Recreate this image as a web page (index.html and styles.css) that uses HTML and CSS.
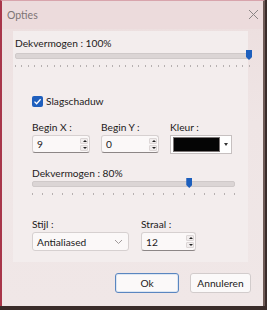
FILE: index.html
```html
<!DOCTYPE html>
<html>
<head>
  <meta charset="utf-8">
  <title>Opties</title>
  <link rel="stylesheet" href="styles.css">
</head>
<body>

  <div class="window">
    <div class="titlebar">
      <span class="title">Opties</span>
      <svg class="close" width="11" height="11" viewBox="0 0 11 11">
        <path d="M1 1L10 10M10 1L1 10" stroke="#8a8484" stroke-width="1" fill="none"/>
      </svg>
    </div>

    <div class="panel">
      <div class="label">Dekvermogen : 100%</div>
      <div class="slider wide">
        <div class="track"></div>
        <div class="thumb" style="left: calc(100% - 6px)"></div>
        <div class="ticks"></div>
      </div>

      <div class="group">
        <label class="check">
          <span class="box">
            <svg width="9" height="9" viewBox="0 0 9 9"><path d="M1.5 4.6L3.6 6.7L7.6 2.2" stroke="#fff" stroke-width="1.3" fill="none"/></svg>
          </span>
          Slagschaduw
        </label>

        <div class="row">
          <div class="field">
            <div class="label">Begin X :</div>
            <div class="spin">
              <span class="value">9</span>
              <span class="arrows"><span class="up"></span><span class="down"></span></span>
            </div>
          </div>
          <div class="field">
            <div class="label">Begin Y :</div>
            <div class="spin">
              <span class="value">0</span>
              <span class="arrows"><span class="up"></span><span class="down"></span></span>
            </div>
          </div>
          <div class="field">
            <div class="label">Kleur :</div>
            <div class="color">
              <span class="swatch"></span>
              <span class="drop"></span>
            </div>
          </div>
        </div>

        <div class="label opacity">Dekvermogen : 80%</div>
        <div class="slider narrow">
          <div class="track"></div>
          <div class="thumb" style="left: 76%"></div>
          <div class="ticks"></div>
        </div>

        <div class="row bottom-row">
          <div class="field">
            <div class="label">Stijl :</div>
            <div class="select">
              <span class="value">Antialiased</span>
              <svg width="9" height="6" viewBox="0 0 9 6"><path d="M1 1L4.5 4.5L8 1" stroke="#a09a9a" stroke-width="1" fill="none"/></svg>
            </div>
          </div>
          <div class="field">
            <div class="label">Straal :</div>
            <div class="spin straal">
              <span class="value">12</span>
              <span class="arrows"><span class="up"></span><span class="down"></span></span>
            </div>
          </div>
        </div>
      </div>
    </div>

    <div class="buttons">
      <button class="btn default">Ok</button>
      <button class="btn">Annuleren</button>
    </div>
  </div>

</body>
</html>
```

FILE: styles.css
```css
html, body {
  margin: 0;
  padding: 0;
  background: #3a2c2a;
}
body {
  font-family: Lato, "Noto Sans", Arial, sans-serif;
  font-size: 10.2px;
  color: #1c1a1a;
}
.window {
  width: 265px;
  height: 306px;
  background: linear-gradient(180deg, #ecdede 0%, #efe5e5 40%, #f0e7e7 100%);
  border-left: 2px solid #a8364a;
  border-top: 1px solid #d8a4ac;
  border-right: 2px solid #6e5a56;
  display: flex;
  flex-direction: column;
  box-sizing: border-box;
}
.titlebar {
  height: 28px;
  display: flex;
  align-items: center;
  justify-content: space-between;
  padding: 0 4px 0 5px;
  background: #ecdbdc;
}
.title {
  color: #7c7474;
  font-size: 10.5px;
}
.close {
  margin-top: -2px;
}
.panel {
  margin: 2px 15px 0 11px;
  padding: 5px 0 0 2px;
  height: 226px;
  background: #f3eded;
}
.label {
  height: 14px;
  line-height: 14px;
  white-space: nowrap;
}
.slider {
  position: relative;
  height: 16px;
}
.slider.wide {
  margin-top: 3px;
  width: 237px;
}
.slider.narrow {
  margin-top: 1px;
  width: 203px;
}
.track {
  height: 4px;
  background: #dbd5d5;
  border: 1px solid #cfc9c9;
  border-radius: 2px;
}
.thumb {
  position: absolute;
  top: -3px;
  width: 6px;
  height: 10px;
  background: #1d5fbd;
  clip-path: polygon(0 0, 100% 0, 100% 70%, 50% 100%, 0 70%);
}
.ticks {
  margin-top: 6px;
  height: 2px;
  background: repeating-linear-gradient(90deg, #b6b0b0 0 1px, transparent 1px 6.5px);
}
.slider.narrow .ticks {
  background: repeating-linear-gradient(90deg, #b6b0b0 0 1px, transparent 1px 10.1px);
}
.group {
  margin-top: 25px;
  padding-left: 17px;
}
.check {
  display: flex;
  align-items: center;
  gap: 3px;
  height: 14px;
}
.box {
  width: 11px;
  height: 11px;
  border-radius: 2px;
  background: #1f5fbd;
  display: flex;
  align-items: center;
  justify-content: center;
}
.row {
  display: flex;
  gap: 11px;
  margin-top: 12px;
}
.field .label {
  margin-bottom: 1px;
}
.spin {
  width: 58px;
  height: 18px;
  box-sizing: border-box;
  background: #fbf8f8;
  border: 1px solid #d6d0d0;
  border-bottom-color: #8c8686;
  border-radius: 3px;
  display: flex;
  align-items: center;
  justify-content: space-between;
  padding: 0 1px 0 4px;
}
.arrows {
  display: flex;
  flex-direction: column;
  gap: 1px;
}
.arrows span {
  width: 8px;
  height: 6px;
  background: #f1eded;
  border: 1px solid #dcd6d6;
  border-radius: 1px;
  box-sizing: border-box;
  position: relative;
}
.arrows span::after {
  content: "";
  position: absolute;
  left: 1.5px;
  border-left: 2px solid transparent;
  border-right: 2px solid transparent;
}
.arrows .up::after {
  top: 1px;
  border-bottom: 2.5px solid #222;
}
.arrows .down::after {
  top: 1px;
  border-top: 2.5px solid #222;
}
.color {
  width: 62px;
  height: 19px;
  box-sizing: border-box;
  background: #fff;
  border: 1px solid #c6c0c0;
  display: flex;
  align-items: center;
  padding: 0 2px;
  gap: 4px;
}
.swatch {
  width: 45px;
  height: 13px;
  background: #050505;
  border: 1px solid #7a7474;
}
.drop {
  border-left: 2px solid transparent;
  border-right: 2px solid transparent;
  border-top: 3px solid #333;
}
.opacity {
  margin-top: 12px;
}
.bottom-row {
  margin-top: 20px;
  gap: 12px;
}
.select {
  width: 97px;
  height: 19px;
  box-sizing: border-box;
  background: #fbf8f8;
  border: 1px solid #d6d0d0;
  border-radius: 3px;
  display: flex;
  align-items: center;
  justify-content: space-between;
  padding: 0 5px 0 4px;
}
.spin.straal {
  width: 55px;
  height: 19px;
}
.buttons {
  display: flex;
  justify-content: flex-end;
  gap: 11px;
  margin-top: 11px;
  padding-right: 12px;
}
.btn {
  font-family: Lato, "Noto Sans", Arial, sans-serif;
  font-size: 10.2px;
  color: #1c1a1a;
  height: 20px;
  padding: 0;
  background: #fbf9f9;
  border: 1px solid #d2cccc;
  border-radius: 3px;
  width: 61px;
}
.btn.default {
  width: 64px;
  border: 1px solid #5a86c0;
  box-shadow: inset 0 0 0 1px #dce6f2;
}
```
